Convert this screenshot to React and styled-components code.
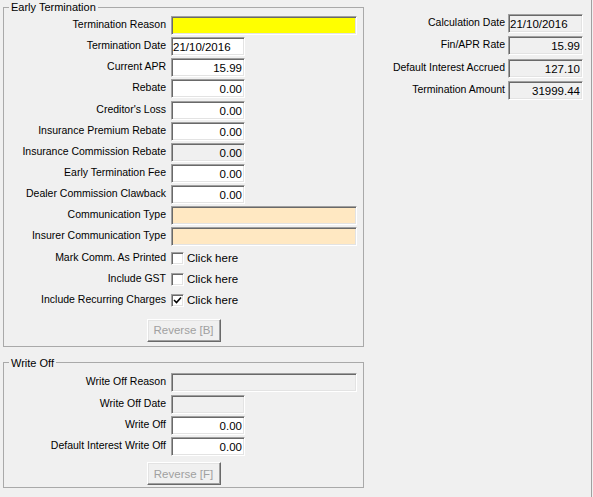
import React from "react";
import styled, { createGlobalStyle, css } from "styled-components";

const GlobalStyle = createGlobalStyle`
  html, body {
    margin: 0;
    padding: 0;
    background: #f0f0f0;
  }
  body {
    font-family: "Liberation Sans", Arial, sans-serif;
    font-size: 10.5px;
    color: #000;
  }
`;

const Page = styled.div`
  display: flex;
  width: 592px;
  height: 497px;
  box-sizing: border-box;
  padding-left: 3px;
  border-right: 1px solid #a0a0a0;
`;

const LeftColumn = styled.div`
  display: flex;
  flex-direction: column;
  width: 361px;
`;

const Group = styled.fieldset`
  margin: ${(p) => (p.$first ? "0" : "9px 0 0 0")};
  padding: 0 0 ${(p) => p.$bottom}px 0;
  border: 1px solid #a9a9a9;
  min-width: 0;
`;

const Legend = styled.legend`
  margin-left: 5px;
  padding: 0 2px;
  font-size: 11px;
  line-height: 14px;
`;

const Body = styled.div`
  display: flex;
  flex-direction: column;
  gap: ${(p) => p.$gap}px;
  padding-top: ${(p) => p.$top}px;
`;

const Row = styled.div`
  display: flex;
  align-items: center;
  height: 19px;
`;

const Label = styled.div`
  width: ${(p) => p.$width}px;
  margin-right: ${(p) => p.$gap}px;
  text-align: right;
  white-space: nowrap;
  line-height: 12px;
  margin-top: -3px;
`;

const tones = {
  white: "#ffffff",
  gray: "#f0f0f0",
  yellow: "#ffff00",
  peach: "#ffe8c2",
};

const sunken = css`
  box-sizing: border-box;
  border: 1px solid;
  border-color: #a0a0a0 #ffffff #ffffff #a0a0a0;
  box-shadow: inset 1px 1px 0 #696969, inset -1px -1px 0 #e3e3e3;
`;

const Field = styled.div`
  ${sunken};
  width: ${(p) => p.$width || (p.$long ? 186 : 74)}px;
  height: 19px;
  background: ${(p) => tones[p.$tone || "white"]};
  padding: 0 2px 0 1px;
  font-size: 11.5px;
  line-height: 18px;
  text-align: ${(p) => (p.$left ? "left" : "right")};
  white-space: nowrap;
  overflow: hidden;
`;

const Box = styled.div`
  ${sunken};
  width: 13px;
  height: 13px;
  background: #fff;
  display: flex;
  align-items: center;
  justify-content: center;
  margin-right: 3px;
`;

const CheckText = styled.span`
  font-size: 11.5px;
  line-height: 13px;
`;

const ButtonRow = styled.div`
  display: flex;
  justify-content: center;
  margin-top: ${(p) => p.$top}px;
`;

const Button = styled.button`
  width: 74px;
  height: 23px;
  box-sizing: border-box;
  background: #f0f0f0;
  color: #a0a0a0;
  font-family: "Liberation Sans", Arial, sans-serif;
  font-size: 11.5px;
  padding: 0;
  border: 1px solid;
  border-color: #ffffff #696969 #696969 #ffffff;
  box-shadow: inset -1px -1px 0 #a0a0a0, inset 1px 1px 0 #e3e3e3;
`;

const RightPanel = styled.div`
  display: flex;
  flex-direction: column;
  gap: 3.4px;
  padding-top: 14px;
`;

function Check({ checked }) {
  return (
    <Box>
      {checked && (
        <svg width="9" height="9" viewBox="0 0 9 9">
          <path d="M1 4 L3.5 6.5 L8 1.5" fill="none" stroke="#000" strokeWidth="1.6" />
        </svg>
      )}
    </Box>
  );
}

const early = [
  { label: "Termination Reason", tone: "yellow", long: true, value: "" },
  { label: "Termination Date", value: "21/10/2016", left: true },
  { label: "Current APR", value: "15.99" },
  { label: "Rebate", value: "0.00" },
  { label: "Creditor's Loss", value: "0.00" },
  { label: "Insurance Premium Rebate", value: "0.00" },
  { label: "Insurance Commission Rebate", value: "0.00", tone: "gray" },
  { label: "Early Termination Fee", value: "0.00" },
  { label: "Dealer Commission Clawback", value: "0.00" },
  { label: "Communication Type", tone: "peach", long: true, value: "" },
  { label: "Insurer Communication Type", tone: "peach", long: true, value: "" },
];

const checks = [
  { label: "Mark Comm. As Printed", checked: false },
  { label: "Include GST", checked: false },
  { label: "Include Recurring Charges", checked: true },
];

const writeOff = [
  { label: "Write Off Reason", tone: "gray", long: true, value: "" },
  { label: "Write Off Date", tone: "gray", value: "" },
  { label: "Write Off", value: "0.00" },
  { label: "Default Interest Write Off", value: "0.00" },
];

const summary = [
  { label: "Calculation Date", value: "21/10/2016", left: true },
  { label: "Fin/APR Rate", value: "15.99" },
  { label: "Default Interest Accrued", value: "127.10" },
  { label: "Termination Amount", value: "31999.44" },
];

export default function App() {
  return (
    <>
      <GlobalStyle />
      <Page>
        <LeftColumn>
          <Group $first $bottom={4}>
            <Legend>Early Termination</Legend>
            <Body $gap={2.15} $top={2}>
              {early.map((f) => (
                <Row key={f.label}>
                  <Label $width={162} $gap={5}>{f.label}</Label>
                  <Field $tone={f.tone} $long={f.long} $left={f.left}>
                    {f.value}
                  </Field>
                </Row>
              ))}
              {checks.map((c) => (
                <Row key={c.label}>
                  <Label $width={162} $gap={5}>{c.label}</Label>
                  <Check checked={c.checked} />
                  <CheckText>Click here</CheckText>
                </Row>
              ))}
            </Body>
            <ButtonRow $top={9}>
              <Button disabled>Reverse [B]</Button>
            </ButtonRow>
          </Group>
          <Group $bottom={2}>
            <Legend>Write Off</Legend>
            <Body $gap={2.3} $top={3.5}>
              {writeOff.map((f) => (
                <Row key={f.label}>
                  <Label $width={162} $gap={5}>{f.label}</Label>
                  <Field $tone={f.tone} $long={f.long}>
                    {f.value}
                  </Field>
                </Row>
              ))}
            </Body>
            <ButtonRow $top={6}>
              <Button disabled>Reverse [F]</Button>
            </ButtonRow>
          </Group>
        </LeftColumn>
        <RightPanel>
          {summary.map((f) => (
            <Row key={f.label}>
              <Label $width={141} $gap={3}>{f.label}</Label>
              <Field $tone="gray" $left={f.left} $width={75}>
                {f.value}
              </Field>
            </Row>
          ))}
        </RightPanel>
      </Page>
    </>
  );
}
